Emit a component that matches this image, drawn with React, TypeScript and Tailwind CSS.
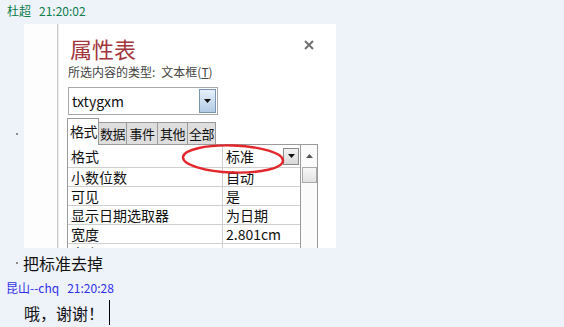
import React from 'react'

const cjk = "font-['Noto_Sans_CJK_SC','Noto_Sans',sans-serif]"

const rows: [string, string][] = [
  ['小数位数', '自动'],
  ['可见', '是'],
  ['显示日期选取器', '为日期'],
  ['宽度', '2.801cm'],
  ['高度', '0.6cm'],
]

const tabs: [string, string][] = [
  ['数据', 'w-[28px]'],
  ['事件', 'w-[31px]'],
  ['其他', 'w-[30px]'],
  ['全部', 'w-[28px]'],
]

function DropBtn({ className }: { className: string }) {
  return (
    <div className={`flex items-center justify-center border bg-gradient-to-b ${className}`}>
      <svg width="7" height="4" viewBox="0 0 7 4">
        <path d="M0 0h7L3.5 4z" fill="#111" />
      </svg>
    </div>
  )
}

function PropertySheet() {
  return (
    <div className="relative flex-1 pl-[9px] pt-[11px] bg-white">
      {/* title */}
      <div className="flex items-start justify-between pr-[22px]">
        <span className="ml-[2px] text-[22px] leading-[26px] text-[#a3353d]">属性表</span>
        <svg width="10" height="10" viewBox="0 0 10 10" className="mt-[5px]">
          <path d="M1 1l8 8M9 1l-8 8" stroke="#707070" strokeWidth="2" />
        </svg>
      </div>
      <div className="mt-[3px] text-[12px] leading-[16px] text-[#444]">
        所选内容的类型:<span className="ml-[6px]">文本框(<span className="underline">T</span>)</span>
      </div>

      {/* combo */}
      <div className="mt-[7px] flex h-[28px] w-[150px] items-center border border-[#a8a8a8] bg-white">
        <span className="flex-1 pl-[3px] text-[14px] text-[#111]">txtygxm</span>
        <DropBtn className="mr-[1px] h-[24px] w-[17px] border-[#7a94b4] from-[#e6f0fb] to-[#b3cbe6]" />
      </div>

      {/* tabs */}
      <div className="relative z-10 mt-[3px] ml-[-1px] flex h-[27px] items-end whitespace-nowrap text-[13px] leading-[21px] tracking-[-0.5px] text-[#111]">
        <div className="h-[27px] w-[32px] border border-b-0 border-[#9a9a9a] bg-white pl-[2px] pt-[2px] text-[14px]">格式</div>
        {tabs.map(([t, w]) => (
          <div key={t} className={`h-[23px] overflow-hidden border-y border-r border-[#9a9a9a] bg-[#dedede] text-center ${w}`}>
            {t}
          </div>
        ))}
      </div>

      {/* grid */}
      <div className="mt-[-1px] ml-[-1px] flex w-[251px] border border-[#9a9a9a] bg-white text-[14px] text-[#111]">
        <div className="w-[232px]">
          <div className="flex h-[23px] items-center border-b border-[#cfcfcf]">
            <span className="w-[155px] border-r border-[#cfcfcf] pl-[3px] leading-[23px]">格式</span>
            <span className="flex-1 pl-[3px]">标准</span>
            <DropBtn className="mr-[1px] h-[17px] w-[16px] border-[#8a8a8a] from-[#f4f4f4] to-[#d8d8d8]" />
          </div>
          {rows.map(([k, v]) => (
            <div key={k} className="flex h-[19px] items-center border-b border-[#cfcfcf] leading-[18px]">
              <span className="w-[155px] border-r border-[#cfcfcf] pl-[3px]">{k}</span>
              <span className="flex-1 pl-[3px]">{v}</span>
            </div>
          ))}
        </div>
        <div className="flex w-[17px] flex-col items-center border-l border-[#9a9a9a] bg-[#fbfbfb]">
          <svg width="7" height="4" viewBox="0 0 7 4" className="mt-[9px]">
            <path d="M0 4h7L3.5 0z" fill="#555" />
          </svg>
          <div className="mt-[9px] h-[16px] w-[15px] border border-[#a9a9a9] bg-gradient-to-b from-[#f7f7f7] to-[#e2e2e2]" />
        </div>
      </div>

      {/* red ellipse */}
      <svg width="110" height="38" viewBox="0 0 110 38" className="absolute left-[119px] top-[116px] z-20">
        <ellipse cx="55" cy="19" rx="50" ry="13.5" fill="none" stroke="#e3262b" strokeWidth="2.4" transform="rotate(2 55 19)" />
      </svg>
    </div>
  )
}

export default function App() {
  return (
    <div className={`h-[327px] w-[564px] overflow-hidden bg-[#eef3fa] ${cjk}`}>
      <div className="h-[24px] pl-[7px] pt-[3px] text-[12px] leading-[16px] text-[#0b7d4c]">
        杜超<span className="ml-[8px]">21:20:02</span>
      </div>

      <div className="flex h-[224px] items-center">
        <div className="ml-[16px] mt-[-4px] h-[2px] w-[2px] bg-[#8c8c8c]" />
        <div className="ml-[6px] flex h-[224px] w-[312px] overflow-hidden bg-white">
          <div className="w-[33px] bg-[#fdfdfd]" />
          <div className="w-[2px] border-l border-[#c9c9c9] bg-[#ececec]" />
          <PropertySheet />
        </div>
      </div>

      <div className="flex h-[30px] items-center">
        <div className="ml-[16px] h-[2px] w-[2px] bg-[#8c8c8c]" />
        <span className="ml-[5px] text-[16px] leading-[22px] text-[#111]">把标准去掉</span>
      </div>

      <div className="h-[20px] pl-[6px] pt-[1px] text-[12px] leading-[17px] text-[#2f2fe8]">
        昆山--chq<span className="ml-[8px]">21:20:28</span>
      </div>

      <div className="flex items-center pl-[24px] pt-[2px]">
        <span className="text-[16px] leading-[22px] text-[#111]">哦，谢谢！</span>
        <div className="ml-[5px] h-[25px] w-[1px] bg-black" />
      </div>
    </div>
  )
}
